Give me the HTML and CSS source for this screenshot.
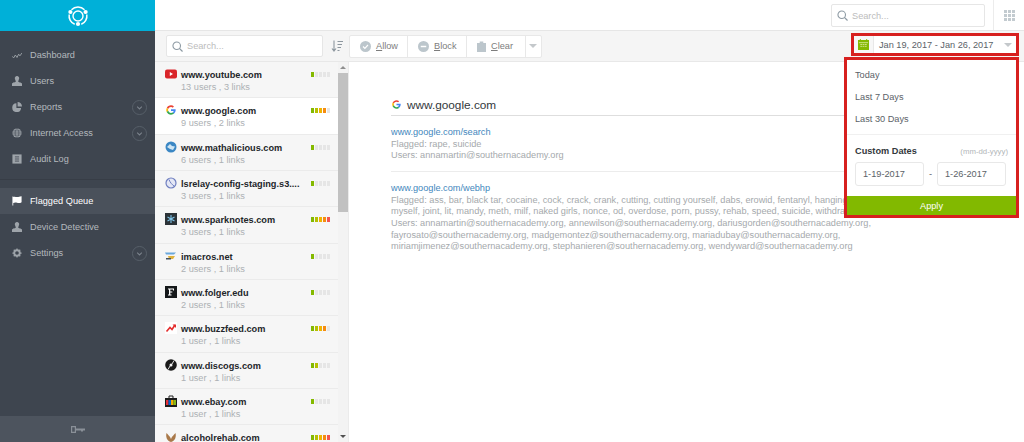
FILE: index.html
```html
<!DOCTYPE html>
<html lang="en">
<head>
<meta charset="utf-8">
<title>Flagged Queue</title>
<link rel="stylesheet" href="styles.css">
</head>
<body>
<svg class="defs" width="0" height="0" aria-hidden="true">
  <symbol id="g" viewBox="0 0 24 24">
    <path fill="#ea4335" d="M12 4.8c1.9 0 3.3.8 4.1 1.500l3-2.900C17.200 1.700 14.800.600 12 .600 7.500.600 3.700 3.200 1.800 6.900l3.500 2.700C6.200 6.800 8.800 4.800 12 4.800z"/>
    <path fill="#4285f4" d="M23.200 12.200c0-.9-.1-1.600-.2-2.300H12v4.300h6.400c-.3 1.600-1.300 2.900-2.600 3.800l3.400 2.700c2.400-2.200 4-5.400 4-8.500z"/>
    <path fill="#fbbc05" d="M5.300 14.400c-.2-.7-.4-1.500-.4-2.400s.2-1.700.4-2.400L1.800 6.900C1 8.400.600 10.200.600 12s.4 3.600 1.200 5.100l3.500-2.700z"/>
    <path fill="#34a853" d="M12 23.400c3.100 0 5.700-1 7.200-2.800l-3.400-2.700c-.9.600-2.200 1.100-3.800 1.100-3.200 0-5.800-2-6.700-5l-3.500 2.700c1.900 3.900 5.700 6.700 10.200 6.700z"/>
  </symbol>
  <symbol id="chev" viewBox="0 0 16 16">
    <circle cx="8" cy="8" r="7.500" fill="none" stroke="#59616b"/>
    <path d="M5.500 7l2.500 2.500L10.500 7" fill="none" stroke="#7b838c" stroke-width="1.100"/>
  </symbol>
  <symbol id="person" viewBox="0 0 12 12">
    <path fill="currentColor" d="M6 0a2.600 2.600 0 0 1 2.500 3.400L7.400 6.500c0 1 4.100 1 4.600 2.600v2.900H0V9.100c.5-1.600 4.600-1.600 4.600-2.600L3.500 3.400A2.600 2.600 0 0 1 6 0z"/>
  </symbol>
  <symbol id="search" viewBox="0 0 14 14">
    <circle cx="6" cy="6" r="4.800" fill="none" stroke="#8d9aa3" stroke-width="1.400"/>
    <path d="M9.400 9.400L13.400 13.400" stroke="#8d9aa3" stroke-width="1.600"/>
  </symbol>
</svg>

<div class="app">
  <aside class="sidebar">
    <div class="brand">
      <svg class="logo" viewBox="0 0 22 22" width="22" height="22">
        <path d="M4.500 4.800A9 9 0 0 1 17.500 4.800M19.800 9.500A9 9 0 0 1 14.300 19.300M7.700 19.300A9 9 0 0 1 2.200 9.500" fill="none" stroke="#fff" stroke-width="1.500"/>
        <circle cx="11" cy="11" r="5" fill="none" stroke="#fff" stroke-width="1.400"/>
        <circle cx="3.400" cy="7" r="2.100" fill="#fff"/>
        <circle cx="18.600" cy="7" r="2.100" fill="#fff"/>
        <circle cx="11" cy="19" r="2.100" fill="#fff"/>
      </svg>
    </div>
    <nav class="nav">
      <ul class="nav-group first">
        <li class="nav-item">
          <svg class="nav-icon" viewBox="0 0 12 12"><path d="M0 7.500l2 2 2-3.500 2 3 2-4 1.500 2L12 3.500" fill="none" stroke="currentColor" stroke-width="1.100"/></svg>
          <span>Dashboard</span>
        </li>
        <li class="nav-item"><svg class="nav-icon"><use href="#person"/></svg><span>Users</span></li>
        <li class="nav-item">
          <svg class="nav-icon" viewBox="0 0 12 12"><path fill="currentColor" d="M5.300 1.500v5.600h5.600A5.300 5.300 0 1 1 5.300 1.500zM6.700 0A5.300 5.300 0 0 1 12 5.300H6.700z"/></svg>
          <span>Reports</span><svg class="chev"><use href="#chev"/></svg>
        </li>
        <li class="nav-item">
          <svg class="nav-icon" viewBox="0 0 12 12"><circle cx="6" cy="6" r="5.500" fill="currentColor"/><path d="M.5 6h11M1.200 3.500h9.600M1.200 8.500h9.600M6 .5c-3 3-3 8 0 11M6 .5c3 3 3 8 0 11" fill="none" stroke="#3e454f" stroke-width=".7"/></svg>
          <span>Internet Access</span><svg class="chev"><use href="#chev"/></svg>
        </li>
        <li class="nav-item">
          <svg class="nav-icon" viewBox="0 0 12 12"><path fill="currentColor" d="M.5.500h11v11H.5z"/><path d="M3.500 3.500h5M3.500 6h5M3.500 8.500h5" stroke="#3e454f"/></svg>
          <span>Audit Log</span>
        </li>
      </ul>
      <ul class="nav-group second">
        <li class="nav-item active">
          <svg class="nav-icon" viewBox="0 0 12 12"><path fill="#fff" d="M.5.500h1v11h-1zM1.500 1.200c2-1.200 3.500.6 6 0 1.400-.3 3-.6 4-.8v7c-2 1.400-4 1-5.500.6-1.400-.4-3.200-.4-4.500.4z"/></svg>
          <span>Flagged Queue</span>
        </li>
        <li class="nav-item"><svg class="nav-icon"><use href="#person"/></svg><span>Device Detective</span></li>
        <li class="nav-item">
          <svg class="nav-icon" viewBox="0 0 12 12"><circle cx="6" cy="6" r="3.300" fill="none" stroke="currentColor" stroke-width="2.200"/><path d="M6 .5v11M.5 6h11M2.100 2.100l7.800 7.800M9.900 2.100l-7.800 7.800" stroke="currentColor" stroke-width="1.500" stroke-dasharray="2 7 2"/></svg>
          <span>Settings</span><svg class="chev"><use href="#chev"/></svg>
        </li>
      </ul>
    </nav>
    <div class="side-foot">
      <svg viewBox="0 0 14 7" width="14" height="7"><path fill="#8a9098" d="M0 0h5v2.500h9V4.500h-2v1H10v-1H5V7H0zM1.200 1.200v4.600h2.600V1.200z"/></svg>
    </div>
  </aside>

  <main class="main">
    <header class="topbar">
      <div class="search top-search">
        <svg class="search-icon"><use href="#search"/></svg><span>Search...</span>
      </div>
      <div class="apps">
        <svg viewBox="0 0 11 11" width="11" height="11"><path fill="#c3cbd0" d="M0 0h3v3H0zM4 0h3v3H4zM8 0h3v3H8zM0 4h3v3H0zM4 4h3v3H4zM8 4h3v3H8zM0 8h3v3H0zM4 8h3v3H4zM8 8h3v3H8z"/></svg>
      </div>
    </header>

    <div class="toolbar">
      <div class="search list-search">
        <svg class="search-icon"><use href="#search"/></svg><span>Search...</span>
      </div>
      <svg class="sort" viewBox="0 0 12 12" width="12" height="12"><path d="M3 .5v10M1 8.500l2 2.500 2-2.500M6.500 1.500H12M6.500 4.500H11M6.500 7.500H10M6.500 10.500H8.500" fill="none" stroke="#8d979f" stroke-width="1.100"/></svg>
      <div class="actions">
        <div class="action allow">
          <svg viewBox="0 0 12 12" width="11" height="11"><circle cx="6" cy="6" r="6" fill="#bcc6cc"/><path d="M3.300 6l2 2 3.400-3.600" fill="none" stroke="#fff" stroke-width="1.300"/></svg>
          <span><u>A</u>llow</span>
        </div>
        <div class="action block">
          <svg viewBox="0 0 12 12" width="11" height="11"><circle cx="6" cy="6" r="6" fill="#bcc6cc"/><path d="M3 6h6" stroke="#fff" stroke-width="1.600"/></svg>
          <span><u>B</u>lock</span>
        </div>
        <div class="action clear">
          <svg viewBox="0 0 10 12" width="9" height="11"><path fill="#bcc6cc" d="M0 2h3V.5h4V2h3v10H0z"/></svg>
          <span><u>C</u>lear</span>
        </div>
        <div class="action more"><i class="caret"></i></div>
      </div>
      <div class="datepicker">
        <div class="cal">
          <svg viewBox="0 0 12 12" width="11" height="11"><path fill="#84b900" d="M0 1h2V0h1v1h6V0h1v1h2v11H0z"/><path d="M1 4h10M2.500 6h2M5 6h2M7.500 6h2M2.500 8h2M5 8h2M7.500 8h2" stroke="#dbe89f" stroke-width=".9"/></svg>
        </div>
        <span class="range">Jan 19, 2017 - Jan 26, 2017</span>
        <i class="caret"></i>
      </div>
    </div>

    <div class="content">
      <div class="site-list">
        <ul class="sites">
          <li class="site">
            <svg class="fav" viewBox="0 0 12 12"><rect y="1.500" width="12" height="9" rx="2" fill="#d9252a"/><path d="M4.800 4v4L8 6z" fill="#fff"/></svg>
            <div class="site-text"><b>www.youtube.com</b><small>13 users , 3 links</small></div>
            <div class="meter"><i class="s1"></i><i></i><i></i><i></i><i></i></div>
          </li>
          <li class="site selected">
            <svg class="fav g-small"><use href="#g"/></svg>
            <div class="site-text"><b>www.google.com</b><small>9 users , 2 links</small></div>
            <div class="meter"><i class="s1"></i><i class="s2"></i><i class="s3"></i><i class="s4"></i><i></i></div>
          </li>
          <li class="site">
            <svg class="fav" viewBox="0 0 12 12"><circle cx="6" cy="6" r="5.500" fill="#3b87c4"/><path d="M2 6l3-3 2 2 3 .5-2 3.500-3-1z" fill="#cfe5f3"/></svg>
            <div class="site-text"><b>www.mathalicious.com</b><small>6 users , 1 links</small></div>
            <div class="meter"><i class="s1"></i><i></i><i></i><i></i><i></i></div>
          </li>
          <li class="site">
            <svg class="fav" viewBox="0 0 12 12"><circle cx="6" cy="6" r="5" fill="#e4e7f5" stroke="#6f7fc0" stroke-width="1.200"/><path d="M4 2.500c1 3 3 5 5 6.500" fill="none" stroke="#6f7fc0"/></svg>
            <div class="site-text"><b>lsrelay-config-staging.s3....</b><small>3 users , 1 links</small></div>
            <div class="meter"><i class="s1"></i><i></i><i></i><i></i><i></i></div>
          </li>
          <li class="site">
            <svg class="fav" viewBox="0 0 12 12"><rect width="12" height="12" fill="#2c3338"/><path d="M6 2v8M2.500 4l7 4M9.500 4l-7 4" stroke="#7fc4e8" stroke-width="1.100"/></svg>
            <div class="site-text"><b>www.sparknotes.com</b><small>3 users , 1 links</small></div>
            <div class="meter"><i class="s1"></i><i class="s2"></i><i class="s3"></i><i class="s4"></i><i class="s5"></i></div>
          </li>
          <li class="site">
            <svg class="fav" viewBox="0 0 12 12"><path d="M0 2.500h11L9 4.500H1z" fill="#6aa8dc"/><path d="M3 6h7L8 9H4z" fill="#e0b23c"/><path d="M1 8h5v1.500H1z" fill="#46525e"/></svg>
            <div class="site-text"><b>imacros.net</b><small>2 users , 1 links</small></div>
            <div class="meter"><i class="s1"></i><i></i><i></i><i></i><i></i></div>
          </li>
          <li class="site">
            <svg class="fav" viewBox="0 0 12 12"><rect width="12" height="12" fill="#15181a"/><path d="M3 2.500h6v2H8V3.500H5.300v2h2v1h-2v2H6.500v1H3v-1h1V3.500H3z" fill="#fff"/></svg>
            <div class="site-text"><b>www.folger.edu</b><small>2 users , 1 links</small></div>
            <div class="meter"><i class="s1"></i><i></i><i></i><i></i><i></i></div>
          </li>
          <li class="site">
            <svg class="fav" viewBox="0 0 12 12"><rect width="12" height="12" fill="#fff"/><path d="M1.500 9.500L5 5.500l2 2L10 3" fill="none" stroke="#e32c2c" stroke-width="1.600"/><path d="M7.500 2.500h3.500V6z" fill="#e32c2c"/></svg>
            <div class="site-text"><b>www.buzzfeed.com</b><small>1 user , 1 links</small></div>
            <div class="meter"><i class="s1"></i><i class="s2"></i><i class="s3"></i><i class="s4"></i><i></i></div>
          </li>
          <li class="site">
            <svg class="fav" viewBox="0 0 12 12"><circle cx="6" cy="6" r="5.800" fill="#1a1a1a"/><circle cx="6" cy="6" r="1.500" fill="#f5f5f5"/><path d="M9 1.500L7 5M3 10.500L5 7" stroke="#f5f5f5" stroke-width=".9"/></svg>
            <div class="site-text"><b>www.discogs.com</b><small>1 user , 1 links</small></div>
            <div class="meter"><i class="s1"></i><i class="s2"></i><i></i><i></i><i></i></div>
          </li>
          <li class="site">
            <svg class="fav" viewBox="0 0 12 12"><path d="M4 3V1h4v2" fill="none" stroke="#222"/><rect y="3" width="12" height="9" fill="#1c1c1c"/><path d="M1 5h2.500v5H1z" fill="#e53238"/><path d="M3.500 5H6v5H3.500z" fill="#0064d2"/><path d="M6 5h2.500v5H6z" fill="#f5af02"/><path d="M8.500 5H11v5H8.500z" fill="#86b817"/></svg>
            <div class="site-text"><b>www.ebay.com</b><small>1 user , 1 links</small></div>
            <div class="meter"><i class="s1"></i><i></i><i></i><i></i><i></i></div>
          </li>
          <li class="site">
            <svg class="fav" viewBox="0 0 12 12"><path d="M6 11C2 10 .5 6 1.500 2 3 4 5 5 6 8c1-3 3-4 4.500-6 1 4-.5 8-4.500 9z" fill="#a9794a"/></svg>
            <div class="site-text"><b>alcoholrehab.com</b><small>1 user , 1 links</small></div>
            <div class="meter"><i class="s1"></i><i class="s2"></i><i class="s3"></i><i class="s4"></i><i class="s5"></i></div>
          </li>
        </ul>
        <div class="scrollbar">
          <i class="arrow up"></i>
          <div class="thumb"></div>
          <i class="arrow down"></i>
        </div>
      </div>

      <section class="detail">
        <h1 class="detail-title"><svg class="fav"><use href="#g"/></svg><span>www.google.com</span></h1>
        <article class="entry">
          <a class="link">www.google.com/search</a>
          <p>Flagged: rape, suicide</p>
          <p>Users: annamartin@southernacademy.org</p>
        </article>
        <article class="entry">
          <a class="link">www.google.com/webhp</a>
          <p>Flagged: ass, bar, black tar, cocaine, cock, crack, crank, cutting, cutting yourself, dabs, erowid, fentanyl, hanging</p>
          <p>myself, joint, lit, mandy, meth, milf, naked girls, nonce, od, overdose, porn, pussy, rehab, speed, suicide, withdrawal</p>
          <p>Users: annamartin@southernacademy.org, annewilson@southernacademy.org, dariusgorden@southernacademy.org,</p>
          <p>fayrosato@southernacademy.org, madgemontez@southernacademy.org, mariadubay@southernacademy.org,</p>
          <p>miriamjimenez@southernacademy.org, stephanieren@southernacademy.org, wendyward@southernacademy.org</p>
        </article>
      </section>
    </div>

    <div class="dropdown">
      <ul class="presets">
        <li>Today</li>
        <li>Last 7 Days</li>
        <li>Last 30 Days</li>
      </ul>
      <div class="custom">
        <div class="custom-head"><b>Custom Dates</b><small>(mm-dd-yyyy)</small></div>
        <div class="custom-fields">
          <div class="field">1-19-2017</div>
          <span class="dash">-</span>
          <div class="field">1-26-2017</div>
        </div>
      </div>
      <div class="apply">Apply</div>
    </div>
  </main>
</div>
</body>
</html>
```

FILE: styles.css
```css
* { box-sizing: border-box; }
html, body { margin: 0; height: 100%; }
body { font-family: "Liberation Sans", Arial, sans-serif; background: #fff; overflow: hidden; }
ul { list-style: none; margin: 0; padding: 0; }
.defs { position: absolute; }

.app { display: grid; grid-template-columns: 155px 869px; grid-template-rows: 442px; width: 1024px; height: 442px; overflow: hidden; }

/* Sidebar */
.sidebar { display: flex; flex-direction: column; background: #3e454f; color: #b4b9be; min-height: 0; }
.brand { height: 31px; flex: none; background: #00b0d8; display: flex; align-items: center; justify-content: center; }
.nav { flex: 1; }
.nav-group.first { padding-top: 11px; padding-bottom: 7px; border-bottom: 1px solid #373d46; }
.nav-group.second { padding-top: 8px; }
.nav-item { height: 26px; display: flex; align-items: center; padding-left: 12px; padding-right: 8px; font-size: 9.200px; }
.nav-item span { flex: 1; margin-left: 8px; }
.nav-icon { width: 10px; height: 10px; color: #9ea4aa; flex: none; }
.chev { width: 15px; height: 15px; flex: none; }
.nav-item.active { background: #4a515b; color: #fff; }
.side-foot { height: 26px; flex: none; background: #4d545e; display: flex; align-items: center; justify-content: center; }

/* Main */
.main { position: relative; display: flex; flex-direction: column; min-width: 0; min-height: 0; }
.topbar { height: 31px; flex: none; display: flex; justify-content: flex-end; border-bottom: 1px solid #e6e6e6; }
.search { display: flex; align-items: center; gap: 4px; background: #fff; border: 1px solid #e6e6e6; border-radius: 2px; font-size: 9.200px; color: #bcbcbc; padding-left: 5px; }
.search-icon { width: 11px; height: 11px; flex: none; }
.top-search { width: 154px; height: 23px; margin-top: 4px; }
.apps { width: 31px; margin-left: 8px; border-left: 1px solid #ececec; display: flex; align-items: center; justify-content: center; }

.toolbar { height: 31px; flex: none; display: flex; align-items: center; background: #f5f5f5; border-bottom: 1px solid #e8e8e8; padding-left: 11px; padding-right: 5px; }
.list-search { width: 157px; height: 22px; }
.sort { margin-left: 8px; flex: none; }
.actions { display: flex; height: 23px; margin-left: 6px; background: #fff; border: 1px solid #e8e8e8; border-radius: 2px; }
.action { display: flex; align-items: center; gap: 5px; padding-left: 10px; font-size: 9.200px; color: #7d7d7d; border-right: 1px solid #e8e8e8; }
.action svg { flex: none; }
.action.allow { width: 58px; }
.action.block { width: 59px; }
.action.clear { width: 59px; }
.action.more { width: 15px; padding-left: 3px; border-right: 0; }
.caret { display: block; width: 0; height: 0; flex: none; border-left: 4px solid transparent; border-right: 4px solid transparent; border-top: 4px solid #c4c8cb; }

.datepicker { margin-left: auto; align-self: flex-start; margin-top: 2px; width: 168px; height: 23px; display: flex; align-items: center; background: #fff; border: 3px solid #d7201f; padding-right: 4px; }
.cal { width: 20px; height: 100%; flex: none; display: flex; align-items: center; justify-content: center; border-right: 1px solid #e8e8e8; background: #f7f7f7; }
.range { flex: 1; font-size: 9.200px; color: #5b6268; padding-left: 5px; white-space: nowrap; }

/* Site list */
.content { flex: 1; display: flex; min-height: 0; }
.site-list { width: 194px; flex: none; display: flex; overflow: hidden; border-right: 1px solid #ebebeb; }
.sites { width: 183px; flex: none; }
.site { height: 36.330px; display: flex; align-items: flex-start; padding: 6px 8px 0 10px; background: #f6f6f6; border-bottom: 1px solid #ebebeb; }
.site.selected { background: #fff; }
.fav { width: 12px; height: 12px; flex: none; }
.fav.g-small { width: 10px; height: 10px; margin: 1px; }
.site-text { flex: 1; min-width: 0; margin-left: 4px; padding-top: 1px; }
.site-text b { display: block; font-size: 9.200px; line-height: 12px; color: #23262a; white-space: nowrap; }
.site-text small { display: block; font-size: 9.200px; line-height: 12px; color: #adb1b4; white-space: nowrap; }
.meter { display: flex; gap: 1px; margin-top: 4px; flex: none; }
.meter i { width: 3px; height: 5px; background: #e6e6e6; }
.meter .s1 { background: #84b900; }
.meter .s2 { background: #b5c000; }
.meter .s3 { background: #f0b400; }
.meter .s4 { background: #f58c10; }
.meter .s5 { background: #f2554f; }

.scrollbar { width: 10px; flex: none; display: flex; flex-direction: column; align-items: center; background: #f3f3f3; }
.thumb { width: 100%; height: 139px; background: #c1c1c1; margin-top: 4px; flex: none; }
.scrollbar .arrow { width: 0; height: 0; flex: none; border-left: 3px solid transparent; border-right: 3px solid transparent; }
.arrow.up { border-bottom: 3px solid #8e8e8e; margin-top: 4px; }
.arrow.down { border-top: 3px solid #505050; margin-top: auto; margin-bottom: 4px; }

/* Detail */
.detail { flex: 1; min-width: 0; padding: 34px 0 0 42px; overflow: hidden; }
.detail-title { display: flex; align-items: center; gap: 6px; margin: 0; height: 17px; width: 627px; font-size: 11.800px; font-weight: 400; color: #33383c; }
.detail-title .fav { width: 9px; height: 9px; margin-left: 1px; }
.entry { width: 627px; padding: 11px 0 9.500px; font-size: 9.200px; line-height: 11.600px; color: #a5a9ac; white-space: nowrap; border-top: 1px solid #ececec; }
.detail-title + .entry { border-top: 1px solid #dedede; margin-top: 2px; }
.entry p { margin: 0; }
.link { display: block; color: #3f87bd; }

/* Dropdown */
.dropdown { position: absolute; left: 689px; top: 57px; width: 175px; height: 161px; background: #fff; border: 3px solid #d7201f; display: flex; flex-direction: column; color: #5b6268; }
.presets { padding: 4px 0 4px; border-bottom: 1px solid #f0f0f0; }
.presets li { height: 22px; display: flex; align-items: center; padding-left: 8px; font-size: 9.200px; }
.custom { flex: 1; padding: 11px 8px 0; }
.custom-head { display: flex; justify-content: space-between; align-items: baseline; line-height: 11px; }
.custom-head b { font-size: 9.200px; color: #33383c; }
.custom-head small { font-size: 7.800px; color: #b2b6b9; }
.custom-fields { display: flex; align-items: center; margin-top: 5px; }
.field { width: 69px; height: 24px; display: flex; align-items: center; padding-left: 7px; border: 1px solid #e8e8e8; border-radius: 3px; font-size: 9.200px; }
.dash { width: 13px; text-align: center; font-size: 9.200px; }
.apply { height: 19px; flex: none; background: #82b900; color: #fff; font-size: 9.200px; display: flex; align-items: center; justify-content: center; }
```
